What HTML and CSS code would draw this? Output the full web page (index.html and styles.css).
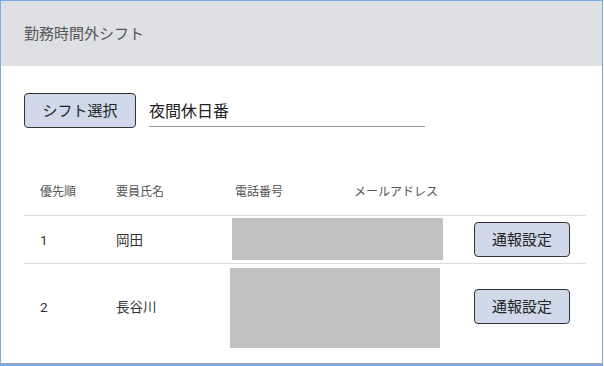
FILE: index.html
```html
<!DOCTYPE html>
<html lang="ja">
<head>
    <meta charset="UTF-8">
    <meta name="viewport" content="width=device-width, initial-scale=1.0">
    <title>勤務時間外シフト</title>
    <link rel="stylesheet" href="styles.css">
</head>
<body>
    <div class="frame">
        <div class="card">
            <header class="card-header">勤務時間外シフト</header>
            <div class="card-body">
                <div class="shift-select">
                    <button class="btn btn-shift">シフト選択</button>
                    <input type="text" class="shift-name" value="夜間休日番" readonly>
                </div>

                <div class="member-table">
                    <div class="row head">
                        <div class="cell">優先順</div>
                        <div class="cell">要員氏名</div>
                        <div class="cell">電話番号</div>
                        <div class="cell">メールアドレス</div>
                        <div class="cell"></div>
                    </div>
                    <div class="row item">
                        <div class="cell">1</div>
                        <div class="cell">岡田</div>
                        <div class="redacted first"></div>
                        <div class="cell"><button class="btn btn-notify">通報設定</button></div>
                    </div>
                    <div class="row item tall">
                        <div class="cell">2</div>
                        <div class="cell">長谷川</div>
                        <div class="redacted second"></div>
                        <div class="cell"><button class="btn btn-notify">通報設定</button></div>
                    </div>
                </div>
            </div>
        </div>
    </div>
</body>
</html>
```

FILE: styles.css
```css
* {
    margin: 0;
    padding: 0;
    box-sizing: border-box;
}
body {
    font-family: Roboto, "Noto Sans CJK JP", sans-serif;
    background-color: #ffffff;
}
.frame {
    width: 603px;
    height: 366px;
    border: 1px solid #7aa9e4;
    border-bottom-width: 2px;
}
.card {
    height: 100%;
    display: flex;
    flex-direction: column;
    background-color: white;
    border-bottom: 1px solid #a8a8a8;
}
.card-header {
    height: 65px;
    display: flex;
    align-items: center;
    padding: 0 23px;
    background-color: #dfe0e5;
    color: #555;
    font-size: 15px;
    line-height: 20px;
}
.card-body {
    padding: 27px 16px 0 23px;
}
.shift-select {
    display: flex;
    align-items: flex-start;
    gap: 13px;
}
.btn {
    font-family: Roboto, "Noto Sans CJK JP", sans-serif;
    background-color: #cfd9ea;
    color: #222;
    border: 1px solid #333;
    border-radius: 4px;
    font-size: 15px;
    line-height: 20px;
    height: 35px;
    padding: 0 17px;
    cursor: pointer;
}
.btn-shift {
    width: 112px;
}
.btn-notify {
    width: 96px;
}
.shift-name {
    font-family: Roboto, "Noto Sans CJK JP", sans-serif;
    width: 276px;
    height: 34px;
    border: none;
    border-bottom: 1px solid #999;
    font-size: 16px;
    color: #222;
    outline: none;
    background: transparent;
}
.member-table {
    margin-top: 41px;
}
.row {
    display: grid;
    grid-template-columns: 76px 119px 239px 128px;
    align-items: center;
}
.row.head {
    grid-template-columns: 76px 119px 119px 120px 128px;
    height: 46px;
    font-size: 12px;
    color: #555;
}
.row.item {
    height: 48px;
    border-top: 1px solid #dddddd;
    font-size: 13.5px;
    color: #333;
}
.row.item.tall {
    height: 86px;
}
.cell {
    padding-left: 16px;
    line-height: 18px;
}
.redacted {
    background-color: #c1c1c1;
}
.redacted.first {
    margin-left: 13px;
    width: 211px;
    height: 42px;
    align-self: start;
    margin-top: 2px;
}
.redacted.second {
    margin-left: 11px;
    width: 210px;
    height: 80px;
    align-self: start;
    margin-top: 4px;
}
```
